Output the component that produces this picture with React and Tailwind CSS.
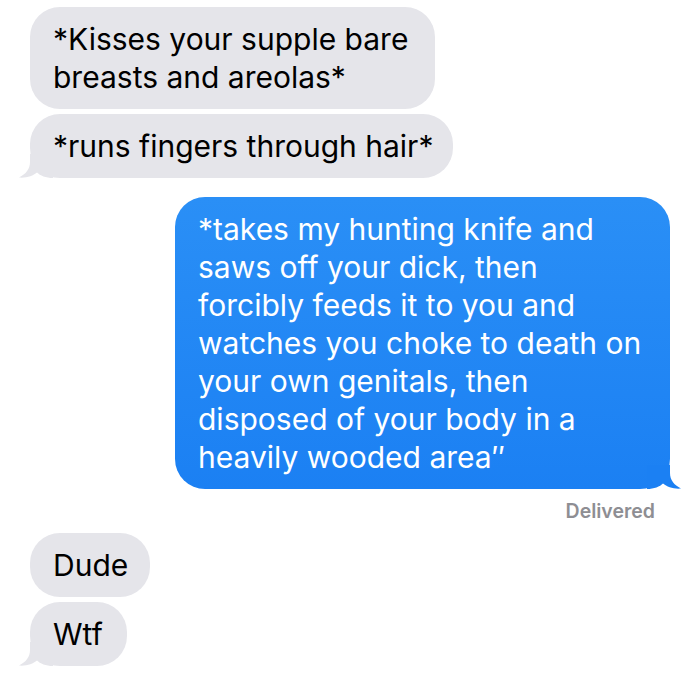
import React from "react";

const font = { fontFamily: "Inter, 'Liberation Sans', sans-serif" };

function LeftTail() {
  return (
    <svg
      className="absolute left-[-11px] bottom-0"
      width="34"
      height="24"
      viewBox="0 0 34 24"
    >
      <path
        d="M11 0 L11 8 C11 15 7 20 0 23.5 C7 24.2 14 22 18 18.5 C21 21.5 27 24 34 24 L34 0 Z"
        fill="#e5e5ea"
      />
    </svg>
  );
}

function RightTail() {
  return (
    <svg
      className="absolute right-[-11px] bottom-0"
      width="34"
      height="24"
      viewBox="0 0 34 24"
    >
      <path
        d="M23 0 L23 8 C23 15 27 20 34 23.5 C27 24.2 20 22 16 18.5 C13 21.5 7 24 0 24 L0 0 Z"
        fill="#1b80f3"
      />
    </svg>
  );
}

function Gray({ children, w, tail, className = "" }) {
  return (
    <div
      className={`relative self-start rounded-[30px] bg-[#e5e5ea] px-[23px] py-[13px] text-[30px] leading-[38px] text-black whitespace-nowrap ${w} ${className}`}
    >
      {children}
      {tail && <LeftTail />}
    </div>
  );
}

export default function App() {
  return (
    <div
      className="w-[700px] h-[690px] bg-white px-[30px] pt-[7px] flex flex-col overflow-hidden"
      style={font}
    >
      <Gray w="w-[405px]">
        *Kisses your supple bare
        <br />
        breasts and areolas*
      </Gray>
      <Gray w="w-[423px]" tail className="mt-[5px]">
        *runs fingers through hair*
      </Gray>

      <div className="relative self-end mt-[19px] w-[495px] rounded-[30px] bg-gradient-to-b from-[#2a8ff6] to-[#1b80f3] px-[23px] py-[13px] text-[30px] leading-[38px] text-white whitespace-nowrap">
        *takes my hunting knife and
        <br />
        saws off your dick, then
        <br />
        forcibly feeds it to you and
        <br />
        watches you choke to death on
        <br />
        your own genitals, then
        <br />
        disposed of your body in a
        <br />
        heavily wooded area″
        <RightTail />
      </div>

      <div className="self-end mr-[15px] mt-[11px] text-[19.5px] leading-[22px] font-semibold text-[#8e8e93]">
        Delivered
      </div>

      <Gray w="w-[120px]" className="mt-[11px]">
        Dude
      </Gray>
      <Gray w="w-[97px]" tail className="mt-[5px]">
        Wtf
      </Gray>
    </div>
  );
}
